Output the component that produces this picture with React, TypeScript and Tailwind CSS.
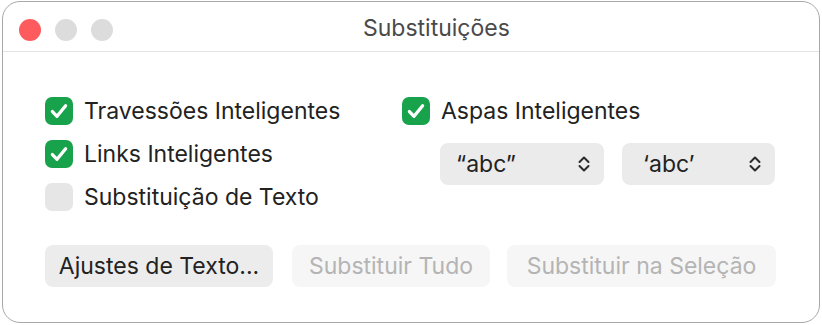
import React from "react";

const font = { fontFamily: "Inter, 'Noto Sans', sans-serif" };

function Check({ checked }: { checked: boolean }) {
  if (!checked)
    return <div className="w-[28px] h-[28px] rounded-[7px] bg-[#e6e6e6] shrink-0" />;
  return (
    <div className="w-[28px] h-[28px] rounded-[7px] bg-[#19a24c] shrink-0 flex items-center justify-center">
      <svg width="22" height="22" viewBox="0 0 20 20" fill="none">
        <path d="M4 10.5 L8.2 14.8 L16 5.2" stroke="white" strokeWidth="3" strokeLinecap="round" strokeLinejoin="round" />
      </svg>
    </div>
  );
}

function Row({ checked, label }: { checked: boolean; label: string }) {
  return (
    <div className="flex items-center h-[28px] gap-[11px]">
      <Check checked={checked} />
      <span className="text-[23px] text-[#222222] leading-none">{label}</span>
    </div>
  );
}

function Chevrons() {
  return (
    <svg width="14" height="18" viewBox="0 0 14 18" fill="none">
      <path d="M2.5 7 L7 2.5 L11.5 7" stroke="#2a2a2a" strokeWidth="2" strokeLinecap="round" strokeLinejoin="round" />
      <path d="M2.5 11 L7 15.5 L11.5 11" stroke="#2a2a2a" strokeWidth="2" strokeLinecap="round" strokeLinejoin="round" />
    </svg>
  );
}

function Popup({ label, w, pl }: { label: string; w: string; pl: string }) {
  return (
    <div className={`${w} ${pl} h-[42px] rounded-[8px] bg-[#ebebeb] flex items-center justify-between pr-[13px]`}>
      <span className="text-[23px] text-[#222222] leading-none">{label}</span>
      <Chevrons />
    </div>
  );
}

export default function App() {
  return (
    <div className="w-[822px] h-[325px] bg-white pt-[1px] pl-[2px]" style={font}>
      <div className="w-[818px] h-[322px] border-[1.5px] border-[#a8a8a8] rounded-[18px] bg-white overflow-hidden">
        <div className="h-[50px] border-b border-[#e4e4e4] flex items-start pl-[16px] pt-[17px]">
          <div className="flex gap-[14px]">
            <div className="w-[22px] h-[22px] rounded-full bg-[#fe5b5f]" />
            <div className="w-[22px] h-[22px] rounded-full bg-[#dcdcdc]" />
            <div className="w-[22px] h-[22px] rounded-full bg-[#dcdcdc]" />
          </div>
          <div className="ml-[250px] -mt-[8px] text-[23px] text-[#4a4a4a] leading-[34px]">Substituições</div>
        </div>
        <div className="pl-[42px] pt-[45px]">
          <div className="flex">
            <div className="w-[357px] flex flex-col gap-[15px]">
              <Row checked label="Travessões Inteligentes" />
              <Row checked label="Links Inteligentes" />
              <Row checked={false} label="Substituição de Texto" />
            </div>
            <div className="flex flex-col gap-[18px]">
              <Row checked label="Aspas Inteligentes" />
              <div className="flex gap-[18px] ml-[38px]">
                <Popup label="“abc”" w="w-[164px]" pl="pl-[16px]" />
                <Popup label="‘abc’" w="w-[153px]" pl="pl-[21px]" />
              </div>
            </div>
          </div>
          <div className="flex mt-[34px] gap-[19px]">
            <div className="w-[228px] h-[42px] rounded-[8px] bg-[#ececec] flex items-center justify-center text-[23px] text-[#222222]">
              Ajustes de Texto...
            </div>
            <div className="w-[198px] h-[42px] rounded-[8px] bg-[#f6f6f6] flex items-center justify-center text-[23px] text-[#b4b4b4]">
              Substituir Tudo
            </div>
            <div className="w-[269px] h-[42px] rounded-[8px] bg-[#f6f6f6] flex items-center justify-center text-[23px] text-[#b4b4b4] -ml-[2px]">
              Substituir na Seleção
            </div>
          </div>
        </div>
      </div>
    </div>
  );
}
